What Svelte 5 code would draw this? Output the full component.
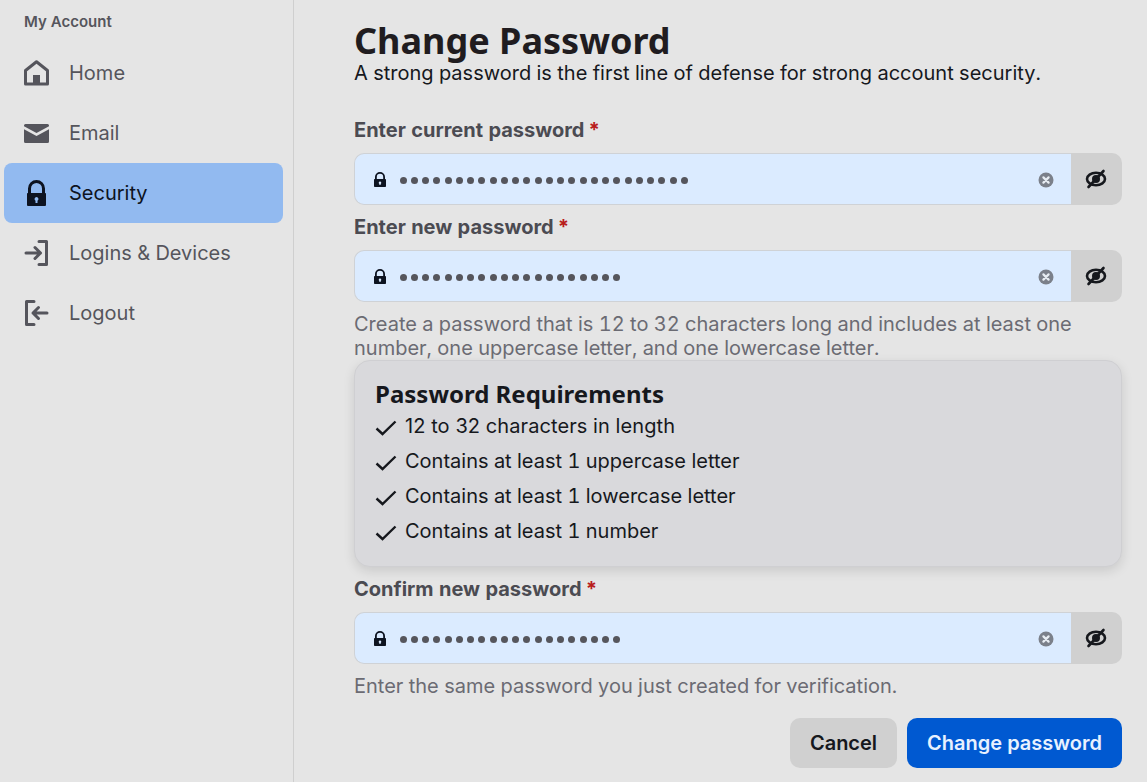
<script>
  const nav = [
    { label: 'Home', icon: 'home' },
    { label: 'Email', icon: 'email' },
    { label: 'Security', icon: 'lock', active: true },
    { label: 'Logins & Devices', icon: 'login' },
    { label: 'Logout', icon: 'logout' }
  ];
  const reqs = [
    '12 to 32 characters in length',
    'Contains at least 1 uppercase letter',
    'Contains at least 1 lowercase letter',
    'Contains at least 1 number'
  ];
</script>

{#snippet field(label, count, help)}
  <div class="label">{label} <span class="req">*</span></div>
  <div class="input">
    <div class="box">
      <svg class="lock" viewBox="0 0 12 15" width="12" height="15"><path fill="#0d1320" fill-rule="evenodd" d="M6 0a5 5 0 0 1 5 5v2h.2a.8.8 0 0 1 .8.8v6.400a.8.8 0 0 1-.8.8H.8a.8.8 0 0 1-.8-.8V7.800a.8.8 0 0 1 .8-.8H1V5a5 5 0 0 1 5-5Zm0 1.800a3.200 3.200 0 0 0-3.200 3.200v2h6.400V5a3.200 3.200 0 0 0-3.200-3.200Zm0 7.700a1.300 1.300 0 0 0-.6 2.450V13h1.200v-1.050A1.300 1.300 0 0 0 6 9.500Z"/></svg>
      <span class="dots">
        {#each Array(count) as _}<i></i>{/each}
      </span>
      <svg class="clear" viewBox="0 0 16 16" width="16" height="16"><circle cx="8" cy="8" r="7.500" fill="#7b808a"/><path d="M5.400 5.400l5.200 5.200M10.600 5.400l-5.200 5.200" stroke="#e8edf3" stroke-width="2.200" stroke-linecap="round"/></svg>
    </div>
    <div class="toggle">
      <svg viewBox="0 0 22 20" width="22" height="20"><ellipse cx="11" cy="10" rx="9" ry="6.200" fill="none" stroke="#16181d" stroke-width="2.600"/><circle cx="11" cy="10" r="4" fill="#16181d"/><path d="M3.500 18 18.500 2" stroke="#16181d" stroke-width="2.600" stroke-linecap="round"/></svg>
    </div>
  </div>
  {#if help}<p class="help">{help}</p>{/if}
{/snippet}

<div class="page">
  <aside class="side">
    <div class="title">My Account</div>
    <nav>
      {#each nav as n}
        <div class="item" class:active={n.active}>
          <span class="ic">
            {#if n.icon === 'home'}
              <svg viewBox="0 0 25 26" width="25" height="26"><path fill="none" stroke="#55555c" stroke-width="3" stroke-linejoin="round" d="M1.500 10.500 12.500 1.800 23.500 10.500v13.500h-22Z"/><rect x="9" y="15" width="7" height="9" fill="#55555c"/></svg>
            {:else if n.icon === 'email'}
              <svg viewBox="0 0 25 26" width="25" height="26"><path fill="#55555c" d="M0 5.500A1.500 1.500 0 0 1 1.500 4h22A1.500 1.500 0 0 1 25 5.500v.8L12.500 13 0 6.300Z"/><path fill="#55555c" d="M0 9.200 12.500 16 25 9.200V21.500a1.500 1.500 0 0 1-1.500 1.500h-22A1.500 1.500 0 0 1 0 21.500Z"/></svg>
            {:else if n.icon === 'lock'}
              <svg viewBox="0 0 25 26" width="25" height="26"><path fill="#0d1320" fill-rule="evenodd" d="M12.500 0a8.500 8.500 0 0 1 8.500 8.500V13h.2a.8.8 0 0 1 .8.8V25a1 1 0 0 1-1 1H4a1 1 0 0 1-1-1V13.800a.8.8 0 0 1 .8-.8H4V8.500A8.500 8.500 0 0 1 12.500 0Zm0 3a5.500 5.500 0 0 0-5.500 5.500V13h11V8.500A5.500 5.500 0 0 0 12.500 3Zm0 14a2 2 0 0 0-1 3.700V23h2v-2.300a2 2 0 0 0-1-3.700Z"/></svg>
            {:else if n.icon === 'login'}
              <svg viewBox="0 0 25 26" width="25" height="26" fill="none" stroke="#55555c" stroke-width="3" stroke-linecap="round" stroke-linejoin="round"><path d="M15 1.500h7.500v23H15"/><path d="M2 13h14.500M11 7.500 16.500 13 11 18.500"/></svg>
            {:else}
              <svg viewBox="0 0 25 26" width="25" height="26" fill="none" stroke="#55555c" stroke-width="3" stroke-linecap="round" stroke-linejoin="round"><path d="M10 1.500H2.500v23H10"/><path d="M23 13H9M14.500 7.500 9 13l5.500 5.500"/></svg>
            {/if}
          </span>
          <span>{n.label}</span>
        </div>
      {/each}
    </nav>
  </aside>

  <main class="main">
    <h1>Change Password</h1>
    <p class="sub">A strong password is the first line of defense for strong account security.</p>

    {@render field('Enter current password', 26)}
    {@render field('Enter new password', 20, 'Create a password that is 12 to 32 characters long and includes at least one number, one uppercase letter, and one lowercase letter.')}

    <section class="panel">
      <h2>Password Requirements</h2>
      <ul>
        {#each reqs as r}
          <li>
            <svg viewBox="0 0 22 16" width="22" height="16"><path d="M1.500 8.500 7.500 14 20.500 1.500" fill="none" stroke="#16181d" stroke-width="2.400"/></svg>
            <span>{r}</span>
          </li>
        {/each}
      </ul>
    </section>

    {@render field('Confirm new password', 20, 'Enter the same password you just created for verification.')}

    <div class="actions">
      <button class="cancel">Cancel</button>
      <button class="primary">Change password</button>
    </div>
  </main>
</div>

<style>
  :global(body) { margin: 0; background: #e5e5e5; }
  .page {
    display: flex; width: 1147px; height: 782px; overflow: hidden;
    font-family: Inter, "Liberation Sans", sans-serif; color: #16181d; background: #e5e5e5;
    font-variant-numeric: tabular-nums;
  }
  .side { width: 293px; flex: none; border-right: 1px solid #cfcfcf; }
  .title { font-size: 15px; font-weight: 600; color: #55555c; line-height: 18px; padding: 13px 0 0 24px; }
  nav { display: flex; flex-direction: column; padding: 12px 10px 0 4px; }
  .item {
    display: flex; align-items: center; gap: 20px; height: 60px; padding-left: 20px;
    border-radius: 8px; font-size: 20px; color: #55555c;
  }
  .item.active { background: #92baf0; color: #0d1320; }
  .ic { display: flex; width: 25px; justify-content: center; }
  .main { flex: 1; padding: 19px 25px 0 60px; min-width: 0; }
  h1 { margin: 0; font-family: "Noto Sans", sans-serif; font-size: 36px; line-height: 44px; font-weight: 700; color: #201c1f; }
  .sub { margin: -2px 0 0; font-size: 20px; line-height: 24px; color: #16181d; }
  .label { margin-top: 10px; font-size: 20px; font-weight: 650; line-height: 24px; color: #4b4b52; }
  .sub + .label { margin-top: 33px; }
  .req { color: #b91c1c; margin-left: -2px; }
  .input { display: flex; height: 52px; margin-top: 11px; }
  .box {
    flex: 1; display: flex; align-items: center; box-sizing: border-box; padding: 0 17px 0 19px;
    background: #dbebff; border: 1px solid #cfd2d6; border-right: 0; border-radius: 10px 0 0 10px;
  }
  .dots { flex: 1; display: flex; gap: 4.250px; margin: 2px 0 0 13.500px; }
  .dots i { width: 7px; height: 7px; border-radius: 50%; background: #55555c; }
  .clear { flex: none; margin-top: 1px; }
  .toggle { width: 51px; box-sizing: border-box; padding-right: 2px; flex: none; display: flex; align-items: center; justify-content: center; background: #d0d0d0; border-radius: 0 10px 10px 0; }
  .help { margin: 10px 0 0; font-size: 20px; line-height: 24px; color: #6b6b73; }
  .panel {
    margin-top: 0; height: 207px; box-sizing: border-box; padding: 18px 20px 0; border-radius: 16px;
    background: #d9d9dc; border: 1px solid #cfcfd2; box-shadow: 0 4px 12px rgba(0,0,0,.12);
  }
  h2 { margin: 0; font-family: "Noto Sans", sans-serif; font-size: 24px; line-height: 30px; font-weight: 700; color: #16181d; }
  ul { list-style: none; margin: -1px 0 0; padding: 0; }
  li { display: flex; align-items: center; gap: 8px; height: 35px; font-size: 20px; color: #16181d; }
  li:first-child span { font-variant-numeric: normal; letter-spacing: .08px; }
  li svg { flex: none; margin-top: 4px; }
  .panel + .label { margin-top: 10px; }
  .actions { display: flex; justify-content: flex-end; gap: 10px; margin-top: 20px; }
  button { height: 50px; border: 0; border-radius: 10px; font-family: inherit; font-size: 20px; font-weight: 600; }
  .cancel { width: 107px; background: #d0d0d0; color: #16181d; }
  .primary { width: 215px; background: #0059d1; color: #e8f1ff; }
</style>
